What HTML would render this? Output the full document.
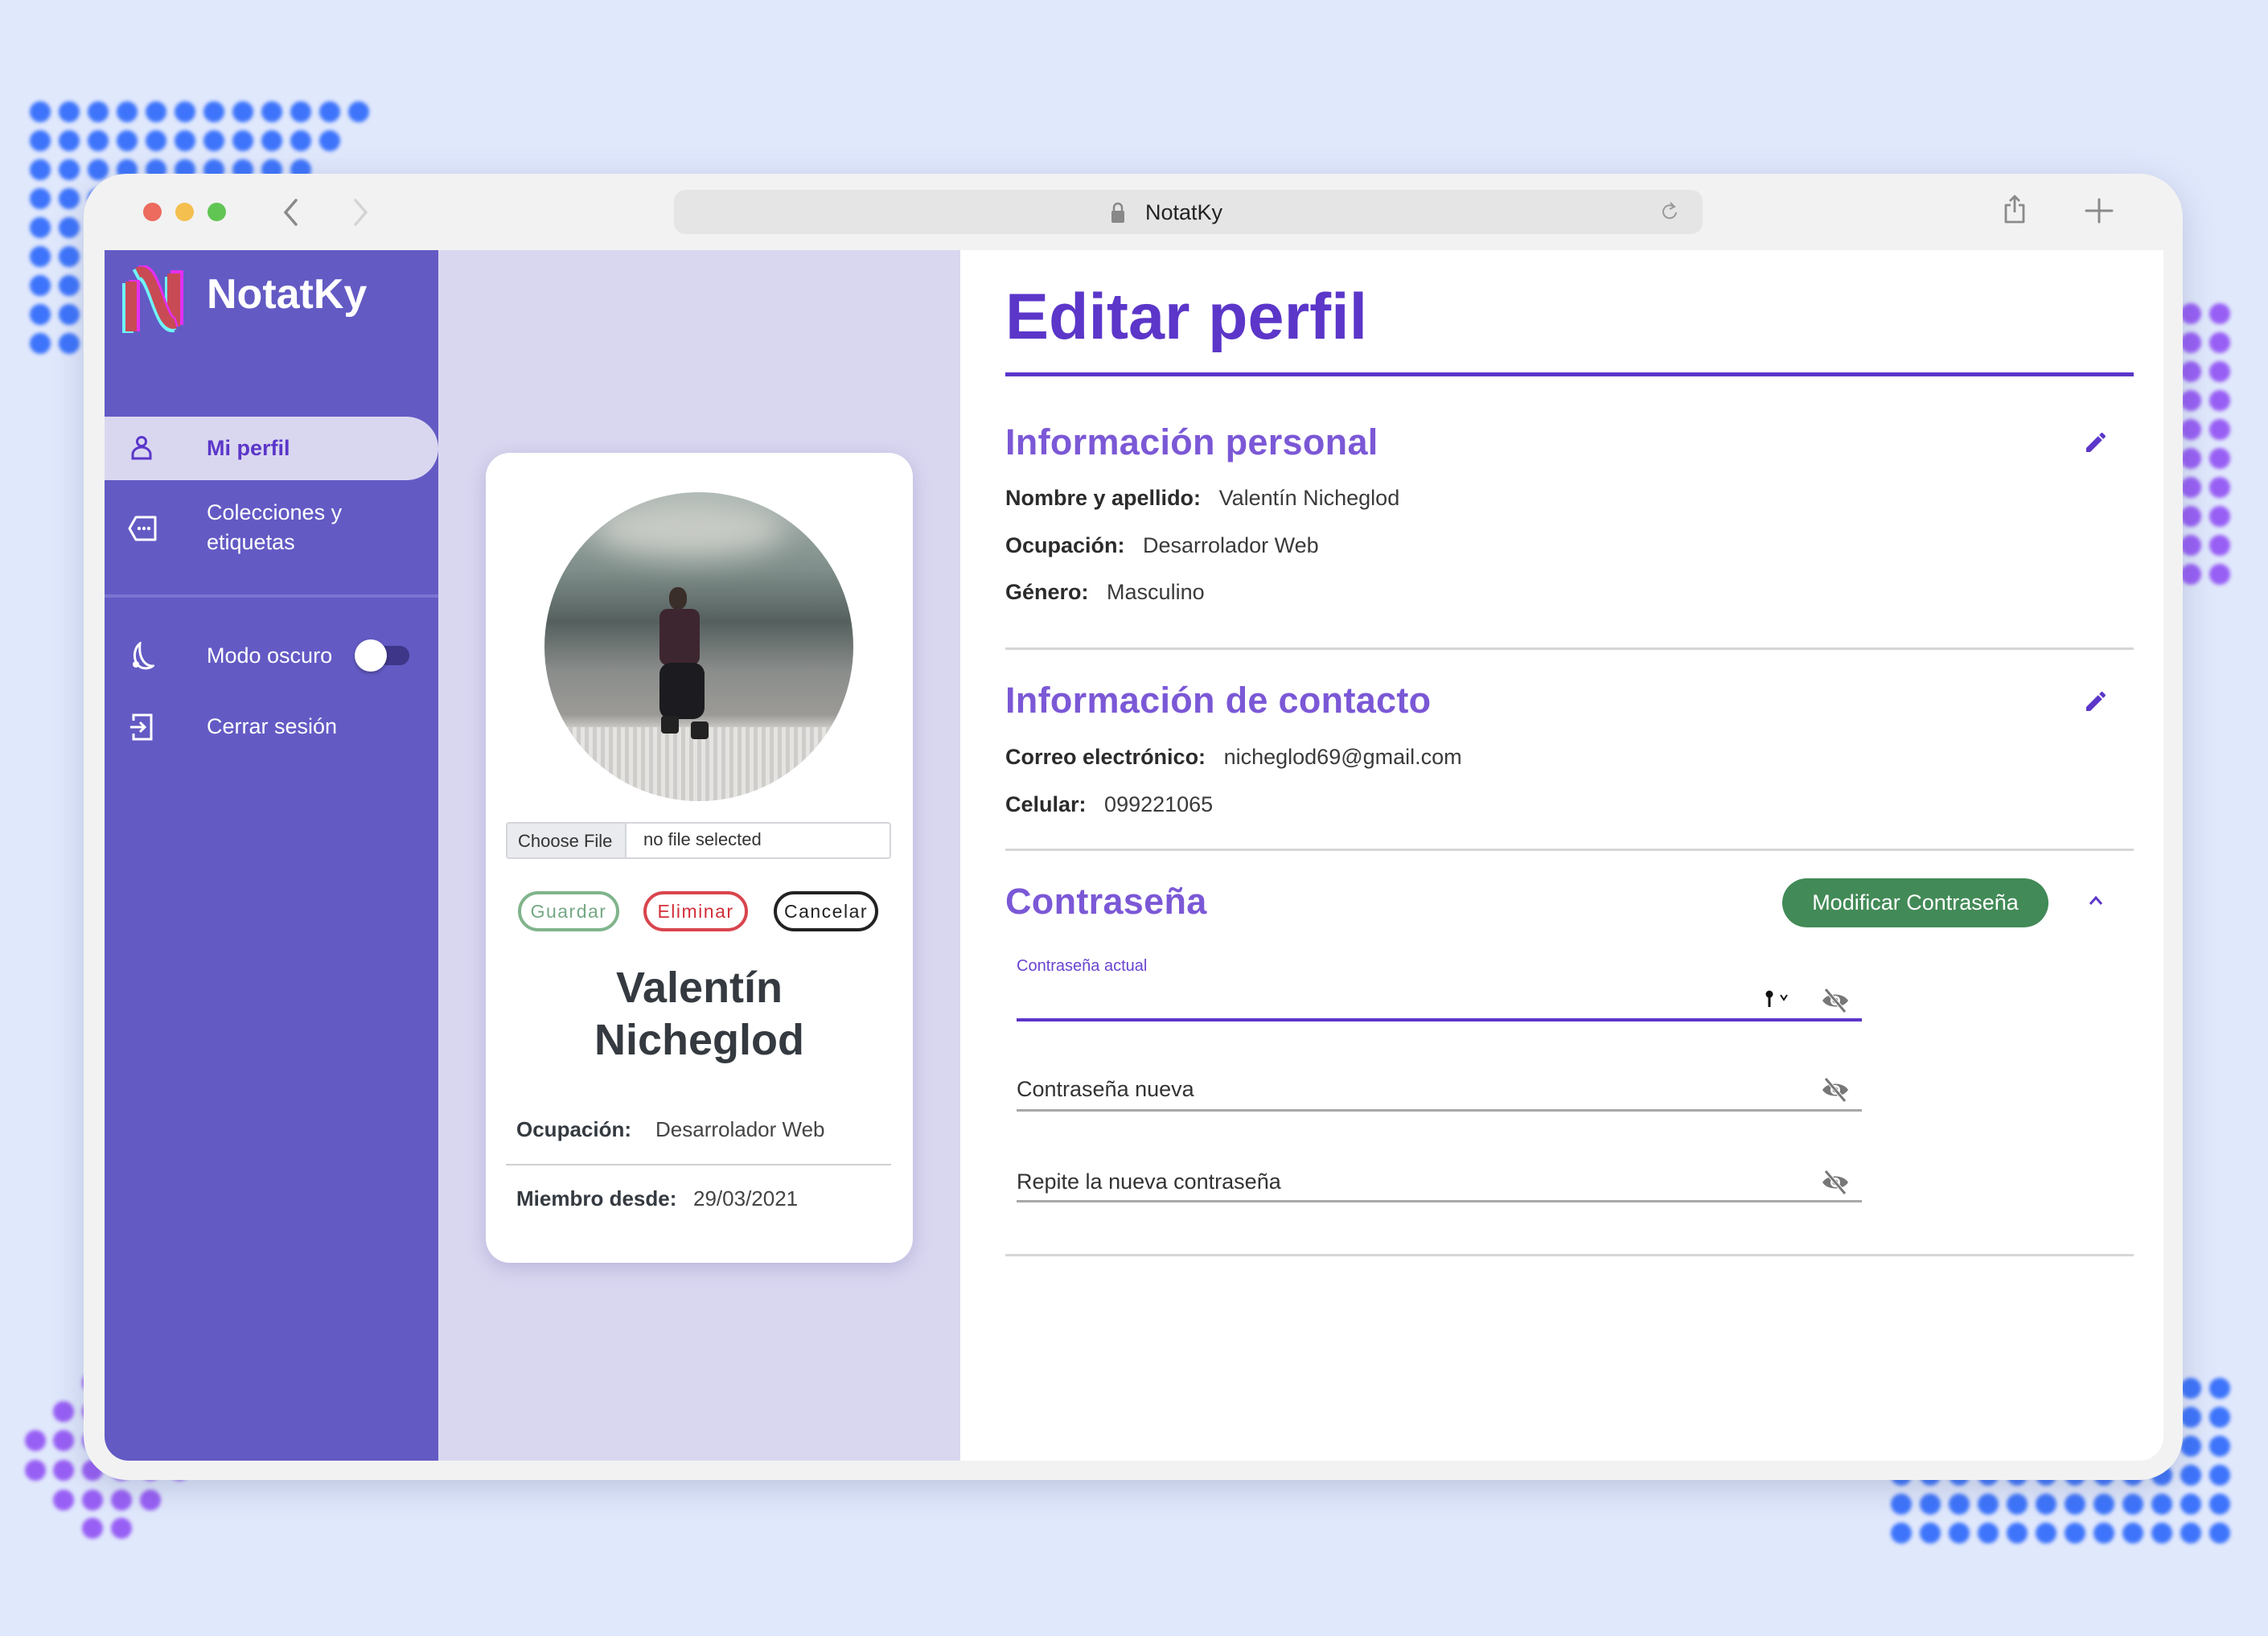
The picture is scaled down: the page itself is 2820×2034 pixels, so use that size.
<!DOCTYPE html>
<html><head><meta charset="utf-8">
<style>
*{margin:0;padding:0;box-sizing:border-box}
body{width:2820px;height:2034px;background:#e0e8fc;position:relative;overflow:hidden;font-family:"Liberation Sans",sans-serif}
.a{position:absolute}
.dot{position:absolute;width:26px;height:26px;border-radius:50%;filter:blur(2.5px)}
.b{background:#3d74fb}.p{background:#985ff5}
.t{position:absolute;white-space:nowrap}
.side{color:#fff;font-size:27px;left:257px}
.lab{font-weight:bold;color:#2b2b2b}
.val{color:#3a3a3a}
.row{font-size:27px;left:1250px;height:40px;line-height:40px}
.h2{font-size:45px;font-weight:bold;color:#7b58d6;left:1250px;height:56px;line-height:56px;letter-spacing:0.3px}
.hr{position:absolute;left:1250px;width:1403px;height:3px;background:#d6d6d6}
.btn{position:absolute;height:50px;border-radius:25px;border:4px solid;font-size:23px;line-height:42px;text-align:center;letter-spacing:1.5px;background:#fff}
</style></head><body>
<div id="dots"></div>
<div class="a" style="left:104px;top:216px;width:2610px;height:1624px;background:#f2f2f2;border-radius:54px;box-shadow:0 10px 40px rgba(80,90,140,0.25)"></div>
<div class="a" style="left:178px;top:252px;width:23px;height:23px;border-radius:50%;background:#ec6a5e"></div>
<div class="a" style="left:218px;top:252px;width:23px;height:23px;border-radius:50%;background:#f4bf4f"></div>
<div class="a" style="left:258px;top:252px;width:23px;height:23px;border-radius:50%;background:#61c554"></div>
<svg class="a" style="left:350px;top:246px" width="24" height="36"><path d="M18 3 L5 18 L18 33" stroke="#8a8a8a" stroke-width="3.5" fill="none" stroke-linecap="round"/></svg>
<svg class="a" style="left:436px;top:246px" width="24" height="36"><path d="M6 3 L19 18 L6 33" stroke="#d4d4d4" stroke-width="3.5" fill="none" stroke-linecap="round"/></svg>
<div class="a" style="left:838px;top:236px;width:1279px;height:55px;background:#e5e5e5;border-radius:14px"></div>
<svg class="a" style="left:1380px;top:250px" width="20" height="28"><path d="M5 12 V8 a5 5 0 0 1 10 0 V12" stroke="#888" stroke-width="2.5" fill="none"/><rect x="2" y="12" width="16" height="15" rx="2" fill="#888"/></svg>
<div class="t" style="left:1424px;top:246px;font-size:27px;line-height:36px;color:#222">NotatKy</div>
<svg class="a" style="left:2064px;top:248px" width="24" height="30"><path d="M17 9 A8 8 0 1 0 20 16" stroke="#999" stroke-width="2" fill="none"/><path d="M13 4 L18 9 L12 12" stroke="#999" stroke-width="2" fill="none"/></svg>
<svg class="a" style="left:2490px;top:242px" width="30" height="36"><path d="M10 13 H4 V34 H26 V13 H20 M15 2 V22 M9 8 L15 2 L21 8" stroke="#8a8a8a" stroke-width="2.8" fill="none" stroke-linejoin="round"/></svg>
<svg class="a" style="left:2592px;top:246px" width="36" height="32"><path d="M18 2 V30 M2 16 H34" stroke="#8a8a8a" stroke-width="3" stroke-linecap="round"/></svg>

<div class="a" style="left:130px;top:311px;width:2560px;height:1505px;border-radius:0 0 30px 30px;overflow:hidden;background:#fff">
  <div class="a" style="left:0;top:0;width:415px;height:1505px;background:#635ac4"></div>
  <div class="a" style="left:415px;top:0;width:649px;height:1505px;background:#d9d7f0"></div>
</div>
<svg class="a" style="left:150px;top:330px" width="92" height="86" viewBox="0 0 92 86">
<rect x="2" y="22" width="14" height="62" fill="#6ff4f7"/><rect x="10" y="18" width="14" height="64" fill="#e52ff0"/>
<rect x="6" y="20" width="14" height="62" fill="#c84a55"/>
<rect x="62" y="6" width="16" height="68" fill="#e52ff0"/><rect x="55" y="14" width="14" height="66" fill="#6ff4f7"/><rect x="58" y="10" width="16" height="66" fill="#c84a55"/>
<path d="M18 12 C40 0 45 80 66 76" stroke="#6ff4f7" stroke-width="14" fill="none"/>
<path d="M24 6 C46 -4 50 76 70 70" stroke="#e52ff0" stroke-width="12" fill="none"/>
<path d="M21 9 C43 -2 47 78 68 72" stroke="#c84a55" stroke-width="13" fill="none"/>
</svg>
<div class="t" style="left:257px;top:334px;font-size:52px;font-weight:bold;color:#fff;line-height:64px">NotatKy</div>
<div class="a" style="left:130px;top:518px;width:415px;height:79px;background:#d9d7f0;border-radius:0 40px 40px 0"></div>
<svg class="a" style="left:162px;top:541px" width="28" height="32"><circle cx="14" cy="8" r="5.5" stroke="#5b36c9" stroke-width="3" fill="none"/><path d="M3 29 V24 a11 9 0 0 1 22 0 V29 Z" stroke="#5b36c9" stroke-width="3" fill="none"/></svg>
<div class="t" style="left:257px;top:537px;font-size:27px;line-height:40px;color:#5b36c9;font-weight:bold">Mi perfil</div>
<svg class="a" style="left:159px;top:640px" width="38" height="34"><path d="M10 3 H34 V31 H10 L2 17 Z" stroke="#fff" stroke-width="3" fill="none" stroke-linejoin="round"/><circle cx="14" cy="17" r="2.2" fill="#fff"/><circle cx="20" cy="17" r="2.2" fill="#fff"/><circle cx="26" cy="17" r="2.2" fill="#fff"/></svg>
<div class="t side" style="top:617px;line-height:40px">Colecciones y</div>
<div class="t side" style="top:654px;line-height:40px">etiquetas</div>
<div class="a" style="left:130px;top:739px;width:415px;height:4px;background:#7c74d2"></div>
<svg class="a" style="left:160px;top:798px" width="32" height="38"><path d="M14 2 C4 10 6 28 16 32 C22 34 28 32 30 30 C20 30 12 20 14 2 Z" stroke="#fff" stroke-width="3" fill="none"/><circle cx="9" cy="28" r="4" fill="#fff"/></svg>
<div class="t side" style="top:795px;line-height:40px">Modo oscuro</div>
<div class="a" style="left:448px;top:803px;width:61px;height:24px;border-radius:12px;background:#3e3688"></div>
<div class="a" style="left:441px;top:795px;width:40px;height:40px;border-radius:50%;background:#fff;box-shadow:0 2px 4px rgba(0,0,0,.3)"></div>
<svg class="a" style="left:160px;top:886px" width="32" height="36"><path d="M6 10 V3 H28 V33 H6 V26" stroke="#fff" stroke-width="3" fill="none"/><path d="M2 18 H20 M14 12 L20 18 L14 24" stroke="#fff" stroke-width="3" fill="none"/></svg>
<div class="t side" style="top:883px;line-height:40px">Cerrar sesión</div>

<div class="a" style="left:604px;top:563px;width:531px;height:1007px;background:#fff;border-radius:30px;box-shadow:0 6px 24px rgba(90,80,160,.25)"></div>
<div class="a" style="left:677px;top:612px;width:384px;height:384px;border-radius:50%;overflow:hidden;background:linear-gradient(180deg,#a9b4b0 0%,#7f8e8a 25%,#55605e 42%,#8a8d8b 58%,#9c9a96 72%,#c9c7c4 76%,#dedcd9 100%)">
  <div class="a" style="left:0;top:292px;width:384px;height:100px;background:repeating-linear-gradient(90deg,#cfcdcb 0 5px,#e6e4e1 5px 10px)"></div>
  <div class="a" style="left:60px;top:10px;width:240px;height:70px;border-radius:50%;background:#c9ccc6;filter:blur(18px)"></div>
  <div class="a" style="left:155px;top:118px;width:22px;height:28px;border-radius:45%;background:#3a2e2a"></div>
  <div class="a" style="left:143px;top:145px;width:50px;height:70px;border-radius:10px;background:#3e2630"></div>
  <div class="a" style="left:143px;top:212px;width:56px;height:70px;border-radius:14px;background:#1c1c20"></div>
  <div class="a" style="left:145px;top:278px;width:22px;height:22px;border-radius:4px;background:#222"></div>
  <div class="a" style="left:182px;top:285px;width:22px;height:22px;border-radius:4px;background:#222"></div>
</div>
<div class="a" style="left:629px;top:1022px;width:479px;height:46px;border:2px solid #d4d6da;border-radius:4px;background:#fff"></div>
<div class="a" style="left:631px;top:1024px;width:148px;height:42px;background:#e9ebee;border-right:2px solid #d4d6da"></div>
<div class="t" style="left:644px;top:1028px;font-size:22px;line-height:36px;color:#333">Choose File</div>
<div class="t" style="left:800px;top:1026px;font-size:22px;line-height:36px;color:#333">no file selected</div>
<div class="btn" style="left:644px;top:1108px;width:126px;border-color:#80b48c;color:#74a884">Guardar</div>
<div class="btn" style="left:800px;top:1108px;width:130px;border-color:#d9454d;color:#d22f3a">Eliminar</div>
<div class="btn" style="left:962px;top:1108px;width:130px;border-color:#222;color:#222">Cancelar</div>
<div class="t" style="left:604px;width:531px;text-align:center;top:1196px;font-size:54px;line-height:64px;font-weight:bold;color:#343a40">Valentín</div>
<div class="t" style="left:604px;width:531px;text-align:center;top:1261px;font-size:54px;line-height:64px;font-weight:bold;color:#343a40">Nicheglod</div>
<div class="t lab" style="left:642px;top:1384px;font-size:26px;line-height:40px;color:#343a40">Ocupación:</div>
<div class="t val" style="left:815px;top:1384px;font-size:26px;line-height:40px;color:#444">Desarrolador Web</div>
<div class="a" style="left:629px;top:1447px;width:479px;height:2px;background:#d0d0d0"></div>
<div class="t lab" style="left:642px;top:1470px;font-size:26px;line-height:40px;color:#343a40">Miembro desde:</div>
<div class="t val" style="left:862px;top:1470px;font-size:26px;line-height:40px;color:#444">29/03/2021</div>

<div class="t" style="left:1250px;top:346px;font-size:81px;line-height:96px;font-weight:bold;color:#5b36c9">Editar perfil</div>
<div class="a" style="left:1250px;top:463px;width:1403px;height:5px;background:#5b36c9"></div>
<div class="t h2" style="top:522px">Información personal</div>
<svg class="a" style="left:2590px;top:534px" width="32" height="32" viewBox="0 0 24 24"><path d="M3 17.25V21h3.75L17.81 9.94l-3.75-3.75L3 17.25zM20.71 7.04a1 1 0 0 0 0-1.41l-2.34-2.34a1 1 0 0 0-1.41 0l-1.83 1.83 3.75 3.75 1.83-1.83z" fill="#5b36c9"/></svg>
<div class="t row" style="top:599px"><span class="lab">Nombre y apellido:</span>&nbsp;&nbsp; <span class="val">Valentín Nicheglod</span></div>
<div class="t row" style="top:658px"><span class="lab">Ocupación:</span>&nbsp;&nbsp; <span class="val">Desarrolador Web</span></div>
<div class="t row" style="top:716px"><span class="lab">Género:</span>&nbsp;&nbsp; <span class="val">Masculino</span></div>
<div class="hr" style="top:805px"></div>
<div class="t h2" style="top:843px">Información de contacto</div>
<svg class="a" style="left:2590px;top:856px" width="32" height="32" viewBox="0 0 24 24"><path d="M3 17.25V21h3.75L17.81 9.94l-3.75-3.75L3 17.25zM20.71 7.04a1 1 0 0 0 0-1.41l-2.34-2.34a1 1 0 0 0-1.41 0l-1.83 1.83 3.75 3.75 1.83-1.83z" fill="#5b36c9"/></svg>
<div class="t row" style="top:921px"><span class="lab">Correo electrónico:</span>&nbsp;&nbsp; <span class="val">nicheglod69@gmail.com</span></div>
<div class="t row" style="top:980px"><span class="lab">Celular:</span>&nbsp;&nbsp; <span class="val">099221065</span></div>
<div class="hr" style="top:1055px"></div>
<div class="t h2" style="top:1093px">Contraseña</div>
<div class="a" style="left:2216px;top:1092px;width:331px;height:61px;border-radius:31px;background:#428a57;color:#fff;font-size:27px;line-height:61px;text-align:center">Modificar Contraseña</div>
<svg class="a" style="left:2596px;top:1112px" width="20" height="16"><path d="M3 12 L10 4 L17 12" stroke="#5b36c9" stroke-width="3" fill="none"/></svg>
<div class="t" style="left:1264px;top:1188px;font-size:20px;line-height:26px;color:#6a44d0">Contraseña actual</div>
<svg class="a" style="left:2194px;top:1230px" width="36" height="26"><circle cx="6" cy="6" r="4.5" fill="#111"/><rect x="4.5" y="8" width="3" height="14" fill="#111"/><path d="M20 7 L24 13 L28 7" stroke="#111" stroke-width="2" fill="none"/></svg>
<div class="a" style="left:1264px;top:1266px;width:1051px;height:4px;background:#5b36c9"></div>
<div class="t" style="left:1264px;top:1334px;font-size:27px;line-height:40px;color:#333">Contraseña nueva</div>
<div class="a" style="left:1264px;top:1379px;width:1051px;height:3px;background:#a8a8a8"></div>
<div class="t" style="left:1264px;top:1449px;font-size:27px;line-height:40px;color:#333">Repite la nueva contraseña</div>
<div class="a" style="left:1264px;top:1492px;width:1051px;height:3px;background:#a8a8a8"></div>
<div class="hr" style="top:1559px"></div>
<svg width="0" height="0" style="position:absolute"><defs><g id="eye"><path d="M2 16 C8 6 28 6 34 16 C28 26 8 26 2 16 Z" fill="#777"/><circle cx="18" cy="16" r="6" fill="#fff"/><circle cx="18" cy="16" r="3.5" fill="#777"/><path d="M6 2 L30 30" stroke="#fff" stroke-width="5"/><path d="M6 2 L30 30" stroke="#777" stroke-width="3"/></g></defs></svg>
<svg class="a" style="left:2264px;top:1228px" width="36" height="32"><use href="#eye"/></svg>
<svg class="a" style="left:2264px;top:1339px" width="36" height="32"><use href="#eye"/></svg>
<svg class="a" style="left:2264px;top:1454px" width="36" height="32"><use href="#eye"/></svg>

<script>
var d=document.getElementById('dots'),h='';
function dot(x,y,c){h+='<div class="dot '+c+'" style="left:'+(x-13)+'px;top:'+(y-13)+'px"></div>';}
for(var r=0;r<9;r++){var n=12-r;for(var i=0;i<n;i++)dot(50+36*i,139+36*r,'b');}
for(var r=0;r<10;r++){dot(2724,390+36*r,'p');dot(2760,390+36*r,'p');}
for(var r=0;r<6;r++)for(var i=0;i<12;i++)dot(2364+36*i,1726+36*r,'b');
var pl=[[1719,[115,151]],[1755,[79,115,151]],[1791,[44,79,115,151,187]],[1828,[44,79,115,151,187,223]],[1865,[79,115,151,187]],[1900,[115,151]]];
pl.forEach(function(a){a[1].forEach(function(x){dot(x,a[0],'p');});});
d.innerHTML=h;
</script>
</body></html>
